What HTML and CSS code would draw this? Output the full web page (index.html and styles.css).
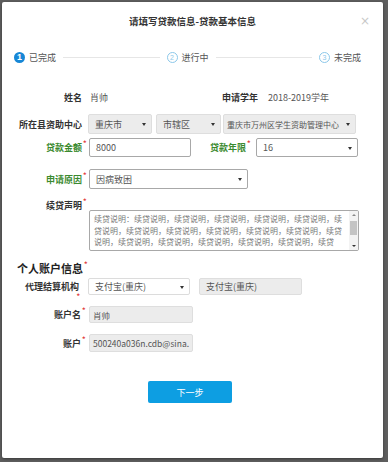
FILE: index.html
```html
<!DOCTYPE html>
<html lang="zh-CN">

<head>
    <meta charset="UTF-8">
    <meta name="viewport" content="width=device-width, initial-scale=1.0">
    <title>请填写贷款信息</title>
    <link rel="stylesheet" href="styles.css">
</head>

<body>
    <div class="modal">
        <div class="modal-header">
            <h1>请填写贷款信息-贷款基本信息</h1>
            <span class="close">×</span>
        </div>

        <div class="steps">
            <div class="step done"><span class="num">1</span>已完成</div>
            <div class="step-line"></div>
            <div class="step"><span class="num">2</span>进行中</div>
            <div class="step-line"></div>
            <div class="step"><span class="num">3</span>未完成</div>
        </div>

        <div class="form">
            <div class="row row-info">
                <label class="lbl">姓名</label>
                <span class="val name-val">肖帅</span>
                <label class="lbl lbl-year">申请学年</label>
                <span class="val">2018-2019学年</span>
            </div>

            <div class="row row-center">
                <label class="lbl">所在县资助中心</label>
                <div class="sel disabled sel-city">重庆市</div>
                <div class="sel disabled sel-area">市辖区</div>
                <div class="sel disabled sel-org">重庆市万州区学生资助管理中心</div>
            </div>

            <div class="row row-amount">
                <label class="lbl green">贷款金额<i class="req">*</i></label>
                <div class="input inp-amount">8000</div>
                <label class="lbl green lbl-term">贷款年限<i class="req">*</i></label>
                <div class="sel sel-term">16</div>
            </div>

            <div class="row row-reason">
                <label class="lbl green">申请原因<i class="req">*</i></label>
                <div class="sel sel-reason">因病致困</div>
            </div>

            <div class="row row-statement">
                <label class="lbl">续贷声明<i class="req">*</i></label>
                <div class="textarea">
                    <div class="textarea-text">续贷说明：续贷说明，续贷说明，续贷说明，续贷说明，续贷说明，续贷说明，续贷说明，续贷说明，续贷说明，续贷说明，续贷说明，续贷说明，续贷说明，续贷说明，续贷说明，续贷说明，续贷说明，续贷</div>
                    <div class="scrollbar">
                        <span class="arrow up"></span>
                        <span class="thumb"></span>
                        <span class="arrow down"></span>
                    </div>
                </div>
            </div>

            <h2 class="section">个人账户信息<i class="req">*</i></h2>

            <div class="row row-agency">
                <div class="lbl wrap">
                    <label>代理结算机构</label>
                    <i class="req">*</i>
                </div>
                <div class="sel sel-agency">支付宝(重庆)</div>
                <div class="input disabled inp-agency">支付宝(重庆)</div>
            </div>

            <div class="row row-account">
                <label class="lbl">账户名<i class="req">*</i></label>
                <div class="input disabled inp-account">肖帅</div>
            </div>

            <div class="row row-account">
                <label class="lbl">账户<i class="req">*</i></label>
                <div class="input disabled inp-account">500240a036n.cdb@sina.</div>
            </div>

            <div class="buttons">
                <button class="btn-next">下一步</button>
            </div>
        </div>
    </div>
</body>

</html>
```

FILE: styles.css
```css
body {
    margin: 0;
    width: 388px;
    height: 462px;
    overflow: hidden;
    background-color: #5e5e5e;
    font-family: "Noto Sans CJK SC", "Noto Sans", sans-serif;
    font-size: 9px;
    color: #333;
}

.modal {
    margin: 2px 0 0 2px;
    width: 381px;
    height: 456px;
    background-color: white;
    border-radius: 2px;
    box-shadow: 0 1px 3px rgba(0, 0, 0, 0.4);
    position: relative;
}

.modal-header {
    height: 38px;
    display: flex;
    align-items: center;
    justify-content: center;
}

.modal-header h1 {
    margin: 0;
    font-size: 9.5px;
    font-weight: bold;
    color: #333;
}

.close {
    position: absolute;
    top: 12px;
    right: 13px;
    color: #c8c8c8;
    font-size: 12px;
    font-family: "DejaVu Sans", sans-serif;
}

/* steps */
.steps {
    display: flex;
    align-items: center;
    padding: 0 22px 0 12px;
    margin-top: 5px;
    height: 24px;
}

.step {
    display: flex;
    align-items: center;
    color: #555;
    font-size: 9px;
    white-space: nowrap;
}

.step .num {
    width: 9px;
    height: 9px;
    border-radius: 50%;
    border: 1px solid #8cc8ea;
    color: #8cc8ea;
    font-size: 7px;
    line-height: 9px;
    text-align: center;
    margin-right: 4px;
    font-family: "Liberation Sans", sans-serif;
}

.step.done .num {
    width: 11px;
    height: 11px;
    border: none;
    background-color: #1787d6;
    color: white;
    font-weight: bold;
    font-size: 9px;
    line-height: 11px;
}

.step-line {
    flex: 1;
    height: 1px;
    background-color: #e6e6e6;
    margin: 0 7px;
}

/* form */
.form {
    padding-top: 18px;
}

.row {
    display: flex;
    align-items: center;
}

.lbl {
    width: 80px;
    flex-shrink: 0;
    text-align: right;
    font-weight: bold;
    color: #333;
    font-size: 9px;
    white-space: nowrap;
    position: relative;
}

.lbl.green {
    color: #3b8a2f;
}

.req {
    color: #e23a3a;
    font-style: normal;
    font-size: 7px;
    vertical-align: top;
    position: absolute;
    top: -3px;
    margin-left: 1px;
}

.val {
    color: #555;
    font-size: 9px;
}

.row-info {
    height: 20px;
}

.name-val {
    margin-left: 8px;
    width: 124px;
}

.lbl-year {
    width: 44px;
    margin-right: 10px;
}

.sel,
.input {
    box-sizing: border-box;
    border: 1px solid #c9c9c9;
    border-radius: 2px;
    background-color: white;
    color: #555;
    font-size: 9px;
    padding-left: 6px;
    white-space: nowrap;
    overflow: hidden;
    position: relative;
    display: flex;
    align-items: center;
}

.sel::after {
    content: "";
    position: absolute;
    right: 5px;
    top: 50%;
    margin-top: -1px;
    border-left: 2px solid transparent;
    border-right: 2px solid transparent;
    border-top: 3px solid #333;
}

.sel.disabled,
.input.disabled {
    background-color: #ececec;
    border-color: #dedede;
}

.row-center {
    margin-top: 7px;
    height: 20px;
}

.row-center .lbl {
    width: 80px;
}

.sel-city {
    margin-left: 6px;
    width: 64px;
    height: 20px;
}

.sel-area {
    margin-left: 4px;
    width: 65px;
    height: 20px;
}

.sel-org {
    margin-left: 2px;
    width: 133px;
    height: 20px;
    font-size: 8px;
    padding-left: 3px;
}

.row-amount {
    margin-top: 4px;
    height: 19px;
}

.inp-amount {
    margin-left: 7px;
    width: 102px;
    height: 19px;
    border-color: #a8a8a8;
}

.lbl-term {
    width: 55px;
    margin-right: 10px;
}

.sel-term {
    width: 102px;
    height: 19px;
    border-color: #a8a8a8;
}

.row-reason {
    margin-top: 12px;
    height: 20px;
}

.sel-reason {
    margin-left: 7px;
    width: 159px;
    height: 20px;
    border-color: #a8a8a8;
}

.row-statement {
    margin-top: 15px;
    align-items: flex-start;
}

.row-statement .lbl {
    margin-top: -5px;
}

.textarea {
    margin-left: 7px;
    margin-top: 6px;
    width: 270px;
    height: 41px;
    box-sizing: border-box;
    border: 1px solid #a8a8a8;
    border-radius: 2px;
    display: flex;
    overflow: hidden;
}

.textarea-text {
    flex: 1;
    padding: 2px 2px 0 4px;
    font-size: 8px;
    line-height: 11.5px;
    color: #777;
    overflow: hidden;
    word-break: break-all;
}

.scrollbar {
    width: 9px;
    background-color: #f3f3f3;
    display: flex;
    flex-direction: column;
    align-items: center;
    justify-content: space-between;
    padding: 3px 0;
    box-sizing: border-box;
}

.arrow {
    border-left: 2px solid transparent;
    border-right: 2px solid transparent;
}

.arrow.up {
    border-bottom: 2px solid #888;
}

.arrow.down {
    border-top: 2px solid #333;
}

.thumb {
    width: 7px;
    height: 14px;
    background-color: #c4c4c4;
    margin-top: -6px;
}

.section {
    margin: 10px 0 0 15px;
    font-size: 11px;
    font-weight: bold;
    color: #222;
    position: relative;
    display: inline-block;
    line-height: 14px;
}

.section .req {
    top: -4px;
}

.row-agency {
    margin-top: 2px;
    align-items: flex-start;
}

.lbl.wrap {
    margin-top: 4px;
    width: 77px;
    height: 17px;
    line-height: 10px;
}

.lbl.wrap .req {
    top: 11px;
    right: -1px;
    line-height: 7px;
}

.sel-agency {
    margin-left: 9px;
    width: 102px;
    height: 17px;
    border-color: #dcdcdc;
}

.inp-agency {
    margin-left: 9px;
    width: 103px;
    height: 17px;
}

.row-account {
    margin-top: 7px;
    height: 17px;
}

.row-account + .row-account {
    margin-top: 11px;
    height: 18px;
}

.inp-account {
    margin-left: 8px;
    width: 104px;
    height: 100%;
    padding-left: 3px;
    font-size: 8.5px;
}

.row-account .lbl {
    width: 79px;
}

.buttons {
    text-align: center;
    margin-top: 29px;
}

.btn-next {
    width: 84px;
    height: 22px;
    border: none;
    border-radius: 2px;
    background-color: #0d9ee2;
    color: white;
    font-family: "Noto Sans CJK SC", sans-serif;
    font-size: 9px;
    cursor: pointer;
    margin-left: -5px;
}
```
